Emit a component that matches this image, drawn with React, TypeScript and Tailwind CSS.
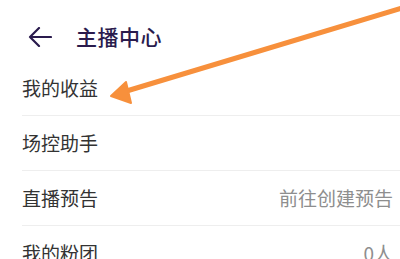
import React from 'react';

const rows = [
  { label: '我的收益', value: '' },
  { label: '场控助手', value: '' },
  { label: '直播预告', value: '前往创建预告' },
  { label: '我的粉团', value: '0人' },
];

export default function App() {
  return (
    <div
      className="relative w-[400px] h-[259px] overflow-hidden bg-white"
      style={{ fontFamily: '"Noto Sans CJK SC", "Noto Sans", sans-serif' }}
    >
      <div className="flex items-center h-[61px] pt-[12px] pl-[28px]">
        <svg width="24" height="20" viewBox="0 0 24 20" className="text-[#2a1b4d]">
          <path d="M23 10H2M11 1L2 10l9 9" fill="none" stroke="currentColor" strokeWidth="2.2" strokeLinecap="round" strokeLinejoin="round" />
        </svg>
        <span className="ml-[24px] text-[21px] font-medium text-[#2a1b4d] tracking-[0.5px]">主播中心</span>
      </div>

      <div className="pl-[22px]">
        {rows.map((r) => (
          <div
            key={r.label}
            className="flex items-center justify-between h-[55px] border-b border-[#eeeeee] pr-[7px]"
          >
            <span className="text-[19px] text-[#333333]">{r.label}</span>
            {r.value && <span className="text-[19px] text-[#8e8e8e]">{r.value}</span>}
          </div>
        ))}
      </div>

      <svg className="absolute inset-0 pointer-events-none" width="400" height="259" viewBox="0 0 400 259">
        <line x1="402" y1="8" x2="120" y2="93" stroke="#f7903c" strokeWidth="5" strokeLinecap="round" />
        <path d="M111 96L126 82L131 103Z" fill="#f7903c" stroke="#f7903c" strokeWidth="2" strokeLinejoin="round" />
      </svg>
    </div>
  );
}
